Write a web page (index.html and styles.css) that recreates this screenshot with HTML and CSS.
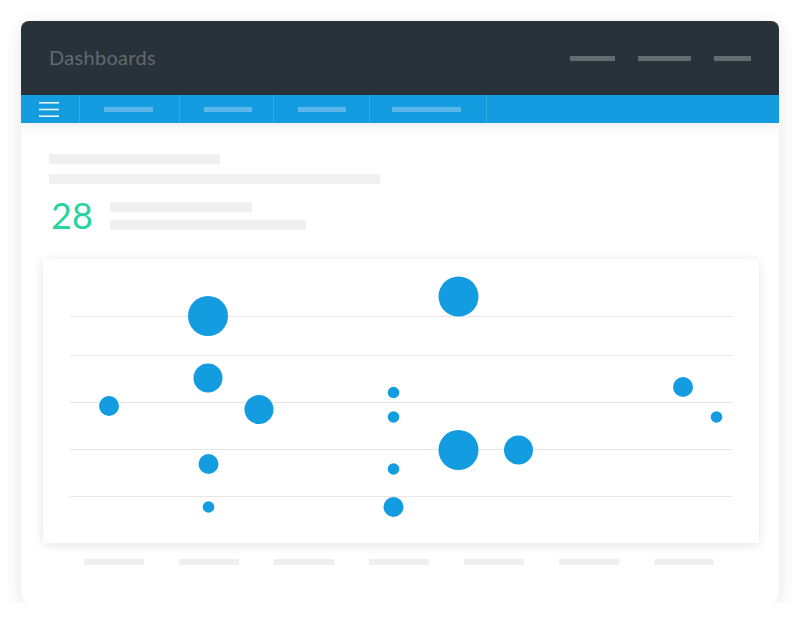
FILE: index.html
```html
<!DOCTYPE html>
<html lang="en">
<head>
    <meta charset="UTF-8">
    <meta name="viewport" content="width=device-width, initial-scale=1.0">
    <title>Dashboards</title>
    <link rel="stylesheet" href="styles.css">
</head>
<body>

<div class="frame">
    <div class="topbar">
        <h1 class="title">Dashboards</h1>
        <div class="top-links">
            <span class="dash" style="width: 45px"></span>
            <span class="dash" style="width: 53px"></span>
            <span class="dash" style="width: 37px"></span>
        </div>
    </div>

    <nav class="navbar">
        <div class="nav-cell menu">
            <svg width="20" height="16" viewBox="0 0 20 16">
                <rect x="0" y="1" width="20" height="1.6" fill="#e8f5fc"/>
                <rect x="0" y="7.7" width="20" height="1.6" fill="#e8f5fc"/>
                <rect x="0" y="14.4" width="20" height="1.6" fill="#e8f5fc"/>
            </svg>
        </div>
        <div class="nav-cell"><span class="nav-dash" style="width: 49px"></span></div>
        <div class="nav-cell"><span class="nav-dash" style="width: 48px"></span></div>
        <div class="nav-cell"><span class="nav-dash" style="width: 48px"></span></div>
        <div class="nav-cell"><span class="nav-dash" style="width: 69px"></span></div>
    </nav>

    <div class="content">
        <div class="line" style="width: 171px"></div>
        <div class="line" style="width: 331px"></div>

        <div class="stat">
            <div class="stat-number">28</div>
            <div class="stat-lines">
                <div class="line" style="width: 142px"></div>
                <div class="line" style="width: 196px"></div>
            </div>
        </div>

        <div class="chart">
            <svg width="716" height="284" viewBox="0 0 716 284">
                <g stroke="#e6e6e6" stroke-width="1">
                    <line x1="27" y1="57.5" x2="689" y2="57.5"/>
                    <line x1="27" y1="96.5" x2="689" y2="96.5"/>
                    <line x1="27" y1="143.5" x2="689" y2="143.5"/>
                    <line x1="27" y1="190.5" x2="689" y2="190.5"/>
                    <line x1="27" y1="237.5" x2="689" y2="237.5"/>
                </g>
                <g fill="#139cdf">
                    <circle cx="66" cy="147" r="10"/>
                    <circle cx="165" cy="57" r="20"/>
                    <circle cx="165" cy="119" r="14.5"/>
                    <circle cx="216" cy="150.5" r="14.5"/>
                    <circle cx="165.5" cy="205" r="10"/>
                    <circle cx="165.5" cy="248" r="5.8"/>
                    <circle cx="350.5" cy="133.5" r="5.8"/>
                    <circle cx="350.5" cy="158" r="5.8"/>
                    <circle cx="350.5" cy="210" r="5.8"/>
                    <circle cx="350.5" cy="248" r="10"/>
                    <circle cx="415.5" cy="37.5" r="20"/>
                    <circle cx="415.5" cy="191" r="20"/>
                    <circle cx="475.5" cy="191" r="14.5"/>
                    <circle cx="640" cy="128" r="10"/>
                    <circle cx="673.5" cy="158" r="5.8"/>
                </g>
            </svg>
        </div>

        <div class="axis">
            <span></span><span></span><span></span><span></span><span></span><span></span><span></span>
        </div>
    </div>
</div>

</body>
</html>
```

FILE: styles.css
```css
* {
    box-sizing: border-box;
}
body {
    margin: 0;
    background: #fff;
    font-family: Lato, 'Open Sans', sans-serif;
}
.frame {
    width: 758px;
    height: 582px;
    margin: 21px 0 0 21px;
    background: #fff;
    border-radius: 8px;
    overflow: hidden;
    box-shadow: 0 0 1px rgba(0, 0, 0, 0.08), 0 4px 18px rgba(0, 0, 0, 0.1);
}
.topbar {
    height: 74px;
    background: #29323a;
    display: flex;
    align-items: center;
    justify-content: space-between;
    padding: 0 28px;
}
.title {
    margin: -3px 0 0;
    font-size: 20px;
    font-weight: 400;
    color: #5f6a70;
    letter-spacing: 0.3px;
}
.top-links {
    display: flex;
    gap: 23px;
}
.dash {
    display: block;
    height: 5px;
    background: #636c6f;
}
.navbar {
    position: relative;
    height: 28px;
    background: #139ce0;
    display: flex;
    box-shadow: 0 4px 10px rgba(0, 0, 0, 0.07);
}
.nav-cell {
    display: flex;
    align-items: center;
    padding: 0 24px;
    border-right: 1px solid #35aae6;
}
.nav-cell:nth-child(2) {
    padding-right: 26px;
}
.nav-cell:nth-child(3) {
    padding-right: 21px;
}
.nav-cell:nth-child(4) {
    padding-right: 23px;
}
.nav-cell:nth-child(5) {
    padding: 0 25px 0 22px;
}
.nav-cell.menu {
    width: 59px;
    padding: 0 0 0 18px;
}
.nav-cell.menu svg {
    display: block;
}
.nav-dash {
    display: block;
    height: 5px;
    background: #5bb7ea;
}
.content {
    padding: 31px 28px 0;
}
.line {
    height: 10px;
    background: #f0f0f0;
    margin-bottom: 10px;
}
.stat {
    display: flex;
    align-items: flex-start;
    margin-top: 18px;
}
.stat-number {
    width: 61px;
    margin-top: -1px;
    font-size: 36px;
    line-height: 28px;
    color: #27d3a0;
    padding-left: 2px;
}
.stat-lines .line {
    margin-bottom: 7.5px;
}
.chart {
    margin: 22px -8px 0 -6px;
    height: 284px;
    background: #fff;
    box-shadow: 0 2px 10px rgba(0, 0, 0, 0.11);
}
.chart svg {
    display: block;
}
.axis {
    display: flex;
    gap: 35px;
    padding-left: 35px;
    margin-top: 16px;
}
.axis span {
    display: block;
    width: 60px;
    height: 6px;
    background: #efefef;
}
```
